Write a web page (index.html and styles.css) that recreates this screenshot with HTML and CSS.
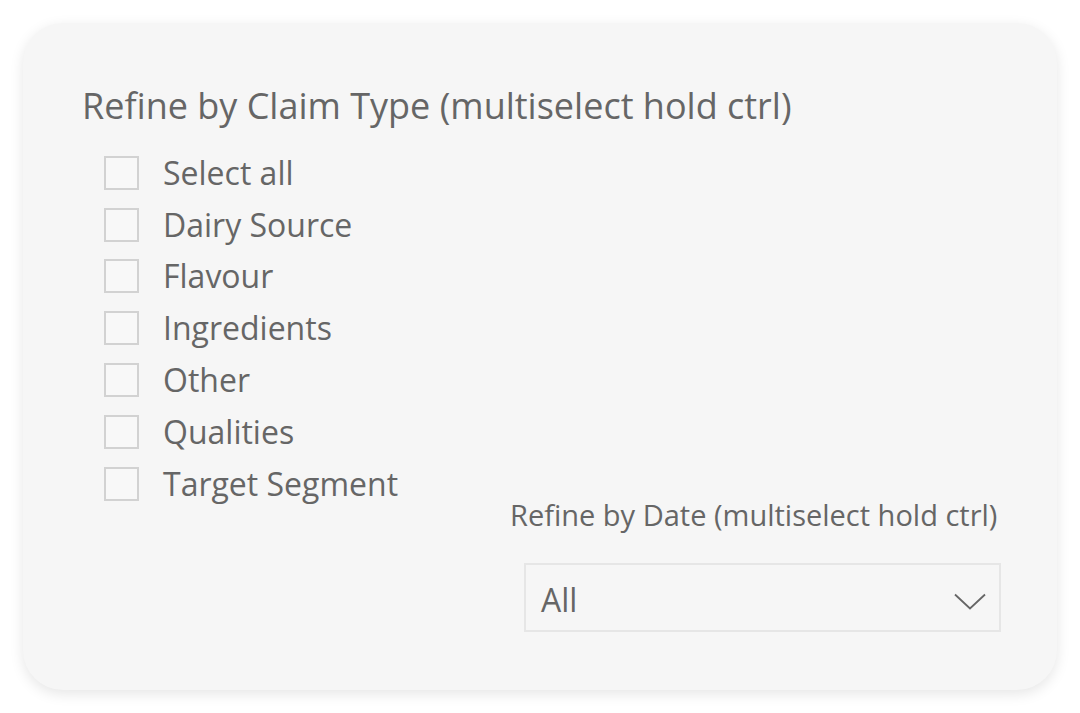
FILE: index.html
```html
<!DOCTYPE html>
<html>
<head>
<meta charset="utf-8">
<link rel="stylesheet" href="styles.css">
</head>
<body>
<div class="card">
  <div class="title">Refine by Claim Type (multiselect hold ctrl)</div>
  <div class="bottom">
    <ul class="list">
      <li class="item"><span class="box"></span><span class="label">Select all</span></li>
      <li class="item"><span class="box"></span><span class="label">Dairy Source</span></li>
      <li class="item"><span class="box"></span><span class="label">Flavour</span></li>
      <li class="item"><span class="box"></span><span class="label">Ingredients</span></li>
      <li class="item"><span class="box"></span><span class="label">Other</span></li>
      <li class="item"><span class="box"></span><span class="label">Qualities</span></li>
      <li class="item"><span class="box"></span><span class="label">Target Segment</span></li>
    </ul>
    <div class="date">
      <div class="date-title">Refine by Date (multiselect hold ctrl)</div>
      <div class="dropdown">
        <span class="value">All</span>
        <svg class="chev" width="32" height="17" viewBox="0 0 32 17"><path d="M1 1.5 L16 15.5 L31 1.5" fill="none" stroke="#666" stroke-width="1.8"/></svg>
      </div>
    </div>
  </div>
</div>
</body>
</html>
```

FILE: styles.css
```css
* { box-sizing: border-box; }
html, body { margin: 0; padding: 0; background: #fff; }
body {
  width: 1080px; height: 713px;
  padding: 23px 23px 0 23px;
  font-family: "Open Sans", "Noto Sans", sans-serif;
  color: #666;
}
.card {
  width: 1034px; height: 667px;
  background: #f6f6f6;
  border-radius: 40px;
  box-shadow: 0 4px 14px rgba(0,0,0,0.10);
  padding: 61px 0 0 59px;
  display: flex; flex-direction: column;
}
.title {
  font-size: 36px;
  line-height: 44px;
}
.bottom { display: flex; }
.list { list-style: none; margin: 19px 0 0 22px; padding: 0; width: 405px; }
.item { display: flex; align-items: center; height: 51.8px; }
.box {
  width: 35px; height: 34px;
  border: 2px solid #d2d2d2;
  background: #f8f8f8;
  margin-right: 24px;
  flex: none;
}
.label { font-size: 32px; line-height: 40px; white-space: nowrap; }
.date { margin-top: 369px; }
.date-title { font-size: 29px; line-height: 36px; margin-left: 1px; white-space: nowrap; }
.dropdown {
  margin: 30px 0 0 15px;
  width: 477px; height: 69px;
  border: 2px solid #e6e6e6;
  display: flex; align-items: center; justify-content: space-between;
  padding: 4px 13px 0 15px;
}
.value { font-size: 32px; line-height: 40px; }
.chev { margin-top: 4px; }
```
